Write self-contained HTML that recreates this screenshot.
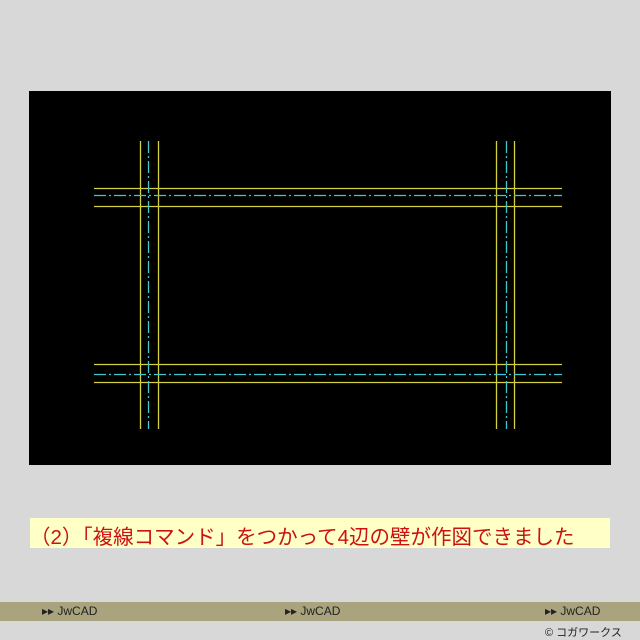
<!DOCTYPE html><html><head><meta charset="utf-8"><style>
body{margin:0;width:640px;height:640px;background:#d8d8d8;position:relative;overflow:hidden;font-family:"Liberation Sans","Noto Sans CJK JP",sans-serif}
.cap{position:absolute;left:30px;top:518px;width:580px;height:30px;background:#ffffc8}
.cap span{position:absolute;left:0px;top:2px;font-size:20.5px;color:#cc1111;white-space:nowrap;letter-spacing:0px}
.band{position:absolute;left:0;top:602px;width:640px;height:19px;background:#a9a47d}
.band span{position:absolute;top:2px;font-size:12px;color:#222}
.cp{position:absolute;left:545px;top:624px;font-size:11px;color:#222}
</style></head><body>
<svg style="position:absolute;left:0;top:0" width="640" height="640">
<rect x="29" y="91" width="582" height="374" fill="#000"/>
<g stroke="#d4d040" stroke-width="1.3">
<line x1="140.5" y1="141" x2="140.5" y2="429"/><line x1="158.5" y1="141" x2="158.5" y2="429"/>
<line x1="496.5" y1="141" x2="496.5" y2="429"/><line x1="514.5" y1="141" x2="514.5" y2="429"/>
<line x1="94" y1="188.5" x2="562" y2="188.5"/><line x1="94" y1="206.5" x2="562" y2="206.5"/>
<line x1="94" y1="364.5" x2="562" y2="364.5"/><line x1="94" y1="382.5" x2="562" y2="382.5"/>
</g>
<g stroke="#40c8d0" stroke-width="1.3" stroke-dasharray="12,3,2,3">
<line x1="148.5" y1="141" x2="148.5" y2="429"/><line x1="506.5" y1="141" x2="506.5" y2="429"/>
<line x1="94" y1="195.5" x2="562" y2="195.5"/><line x1="94" y1="374.5" x2="562" y2="374.5"/>
</g>
</svg>
<div class="cap"><span>（2）「複線コマンド」をつかって4辺の壁が作図できました</span></div>
<div class="band"><span style="left:42px">▸▸ JwCAD</span><span style="left:285px">▸▸ JwCAD</span><span style="left:545px">▸▸ JwCAD</span></div>
<div class="cp">© コガワークス</div>
</body></html>
